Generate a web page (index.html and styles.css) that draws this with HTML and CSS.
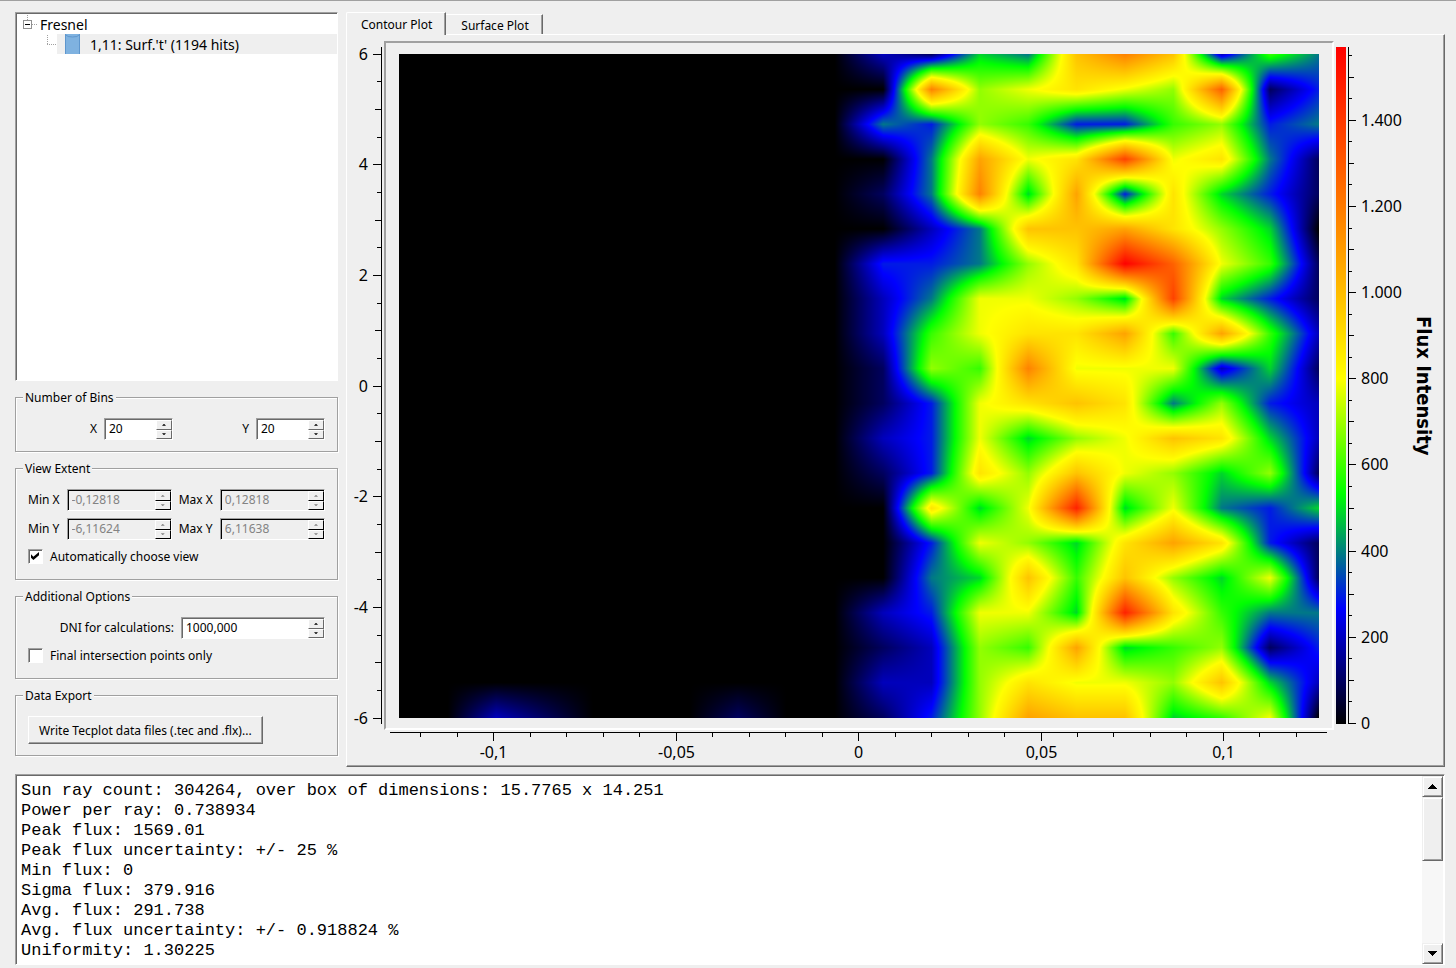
FILE: index.html
```html
<!DOCTYPE html>
<html lang="en">
<head>
<meta charset="utf-8">
<title>Flux Plot</title>
<link rel="stylesheet" href="styles.css">
</head>
<body>
<main class="workspace">
  <aside class="sidebar">
    <ul class="tree" role="tree" aria-label="Surfaces">
      <li class="tree-item" role="treeitem" aria-expanded="true">
        <div class="tree-row">
          <button class="expander" type="button" aria-label="Collapse Fresnel">
            <svg width="20" height="20" viewBox="0 0 20 20" shape-rendering="crispEdges"><path d="M9.500 1v5M14 10.500h5" stroke="#a0a0a0" stroke-dasharray="1 1"/><rect x="5.500" y="6.500" width="8" height="8" fill="#fff" stroke="#919191"/><path d="M7 10.500h5" stroke="#000"/></svg>
          </button>
          <span class="tree-text">Fresnel</span>
        </div>
        <ul class="tree-children" role="group">
          <li class="tree-row" role="treeitem" aria-selected="true">
            <svg class="branch" width="40" height="20" viewBox="0 0 40 20" shape-rendering="crispEdges"><path d="M30.500 1v9M30 10.500h10" fill="none" stroke="#a0a0a0" stroke-dasharray="1 1"/></svg>
            <span class="tree-leaf">
              <svg width="15" height="20" viewBox="0 0 15 20"><path d="M0 0h15v20H0z" fill="#7fb2e0"/><path d="M.5 0v20M14.500 0v20" stroke="#5e96cd"/><path d="M1 1q1 2 6.500 2t6.500-2" fill="none" stroke="#5e96cd"/></svg>
              <span class="tree-text">1,11: Surf.'t' (1194 hits)</span>
            </span>
          </li>
        </ul>
      </li>
    </ul>

    <fieldset class="group bins">
      <legend>Number of Bins</legend>
      <label for="bins-x">X</label>
      <span class="spin"><input id="bins-x" type="text" value="20"><span class="steps"><button type="button" aria-label="More X bins"></button><button type="button" class="down" aria-label="Fewer X bins"></button></span></span>
      <label for="bins-y">Y</label>
      <span class="spin"><input id="bins-y" type="text" value="20"><span class="steps"><button type="button" aria-label="More Y bins"></button><button type="button" class="down" aria-label="Fewer Y bins"></button></span></span>
    </fieldset>

    <fieldset class="group extent">
      <legend>View Extent</legend>
      <label for="min-x">Min X</label>
      <span class="spin off"><input id="min-x" type="text" value="-0,12818" disabled><span class="steps"><button type="button" disabled aria-label="Increase Min X"></button><button type="button" class="down" disabled aria-label="Decrease Min X"></button></span></span>
      <label for="max-x">Max X</label>
      <span class="spin off"><input id="max-x" type="text" value="0,12818" disabled><span class="steps"><button type="button" disabled aria-label="Increase Max X"></button><button type="button" class="down" disabled aria-label="Decrease Max X"></button></span></span>
      <label for="min-y">Min Y</label>
      <span class="spin off"><input id="min-y" type="text" value="-6,11624" disabled><span class="steps"><button type="button" disabled aria-label="Increase Min Y"></button><button type="button" class="down" disabled aria-label="Decrease Min Y"></button></span></span>
      <label for="max-y">Max Y</label>
      <span class="spin off"><input id="max-y" type="text" value="6,11638" disabled><span class="steps"><button type="button" disabled aria-label="Increase Max Y"></button><button type="button" class="down" disabled aria-label="Decrease Max Y"></button></span></span>
      <label class="check"><input type="checkbox" checked>Automatically choose view</label>
    </fieldset>

    <fieldset class="group options">
      <legend>Additional Options</legend>
      <label for="dni">DNI for calculations:</label>
      <span class="spin"><input id="dni" type="text" value="1000,000"><span class="steps"><button type="button" aria-label="Increase DNI"></button><button type="button" class="down" aria-label="Decrease DNI"></button></span></span>
      <label class="check"><input type="checkbox">Final intersection points only</label>
    </fieldset>

    <fieldset class="group export">
      <legend>Data Export</legend>
      <button class="push" type="button">Write Tecplot data files (.tec and .flx)...</button>
    </fieldset>
  </aside>

  <section class="tabs">
    <div class="tab-bar" role="tablist">
      <button class="tab current" type="button" role="tab" aria-selected="true">Contour Plot</button>
      <button class="tab" type="button" role="tab" aria-selected="false">Surface Plot</button>
    </div>
    <div class="pane" role="tabpanel">
      <svg class="axis axis-left" id="axis-left"></svg>
      <div class="frame"><canvas id="contour" width="920" height="664" aria-label="Flux contour plot"></canvas></div>
      <div class="color-bar"></div>
      <svg class="axis axis-scale" id="axis-scale"></svg>
      <div class="scale-title">Flux Intensity</div>
      <svg class="axis axis-bottom" id="axis-bottom"></svg>
    </div>
  </section>
</main>

<section class="log">
  <textarea class="log-text" rows="9" readonly aria-label="Statistics">Sun ray count: 304264, over box of dimensions: 15.7765 x 14.251
Power per ray: 0.738934
Peak flux: 1569.01
Peak flux uncertainty: +/- 25 %
Min flux: 0
Sigma flux: 379.916
Avg. flux: 291.738
Avg. flux uncertainty: +/- 0.918824 %
Uniformity: 1.30225</textarea>
  <div class="scrollbar">
    <button class="scroll-button" type="button" aria-label="Scroll up"><svg width="9" height="5" viewBox="0 0 9 5" shape-rendering="crispEdges"><path d="M4 0h1v1h1v1h1v1h1v1h1v1H0V4h1V3h1V2h1V1h1z"/></svg></button>
    <div class="scroll-track"><div class="scroll-thumb"></div></div>
    <button class="scroll-button" type="button" aria-label="Scroll down"><svg width="9" height="5" viewBox="0 0 9 5" shape-rendering="crispEdges"><path d="M0 0h9v1H8v1H7v1H6v1H5v1H4V4H3V3H2V2H1V1H0z"/></svg></button>
  </div>
</section>
<script src="plot.js"></script>
</body>
</html>
```
FILE: styles.css
```css
* {
  box-sizing: border-box;
}

body {
  margin: 0;
  height: 100vh;
  min-height: 700px;
  border-top: 1px solid #a0a0a0;
  padding: 11px 11px 3px 15px;
  display: flex;
  flex-direction: column;
  gap: 7px;
  background: #efefef;
  color: #000;
  font: 12px/16px "Noto Sans", sans-serif;
}

button,
input {
  font: inherit;
  color: inherit;
}

button {
  padding: 0;
}

label {
  white-space: nowrap;
}

.workspace {
  flex: 1;
  min-height: 0;
  display: grid;
  grid-template-columns: 323px minmax(0, 1fr);
  gap: 8px;
}

/* Sidebar */
.sidebar {
  display: flex;
  flex-direction: column;
  gap: 8px;
  padding-bottom: 11px;
}

.tree {
  flex: 1;
  min-height: 60px;
  margin: 0;
  padding: 1px 0 0;
  list-style: none;
  background: #fff;
  border: 1px solid;
  border-color: #a0a0a0 #fff #fff #a0a0a0;
  box-shadow: inset 1px 1px 0 #696969;
  font: 14px/20px "Noto Sans", sans-serif;
}

.tree-children {
  margin: 0;
  padding: 0;
  list-style: none;
}

.tree-row {
  display: flex;
  height: 20px;
  padding-left: 2px;
}

.tree-text {
  line-height: 22px;
}

.expander {
  display: flex;
  border: 0;
  background: none;
  margin-right: 2px;
}

.branch {
  margin-left: -1px;
}

.tree-leaf {
  flex: 1;
  display: flex;
  gap: 10px;
  padding-left: 8px;
  background: #efefef;
}

.group {
  min-width: 0;
  margin: 0;
  padding: 12px 12px 11px;
  border: 1px solid #a0a0a0;
  box-shadow: 1px 1px 0 #fff, inset 1px 1px 0 #fff;
  display: grid;
  align-items: center;
  gap: 7px;
}

.group legend {
  height: 17px;
  line-height: 17px;
  margin-left: -5px;
  padding: 0 2px;
  background: #efefef;
}

.bins {
  grid-template-columns: 1fr 69px 1fr 69px;
  justify-items: end;
}

.extent {
  grid-template-columns: auto minmax(0, 1fr) auto minmax(0, 1fr);
  padding-bottom: 12px;
}

.options {
  grid-template-columns: 1fr 144px;
  padding-bottom: 12px;
}

.options > label:first-of-type {
  text-align: right;
}

.export {
  justify-items: start;
}

.spin {
  display: flex;
  width: 100%;
  height: 22px;
  background: #fff;
  border: 1px solid;
  border-color: #a0a0a0 #fff #fff #a0a0a0;
  box-shadow: inset 1px 1px 0 #696969;
}

.spin input {
  flex: 1;
  min-width: 0;
  border: 0;
  padding: 0 0 0 4px;
  background: none;
  outline: 0;
}

.steps {
  display: flex;
  flex-direction: column;
  width: 16px;
  padding-top: 1px;
}

.steps button {
  flex: 1;
  display: flex;
  align-items: center;
  justify-content: center;
  background: #efefef;
  border: 1px solid;
  border-color: #fff #696969 #696969 #fff;
}

.steps button::before {
  content: "";
  width: 4px;
  height: 2px;
  background: #000;
  clip-path: polygon(50% 0, 100% 100%, 0 100%);
}

.steps .down::before {
  clip-path: polygon(0 0, 100% 0, 50% 100%);
}

.spin.off {
  background: #efefef;
  color: #838383;
  box-shadow: inset 1px 1px 0 #000;
}

.off .steps button {
  border-color: #fff #000 #000 #fff;
}

.off .steps button::before {
  background: #838383;
}

.check {
  grid-column: 1 / -1;
  display: flex;
  align-items: center;
  gap: 7px;
  height: 20px;
}

.check input {
  appearance: none;
  width: 15px;
  height: 15px;
  margin: 0 0 1px;
  background: #fff;
  border: 1px solid;
  border-color: #a0a0a0 #fff #fff #a0a0a0;
  box-shadow: inset 1px 1px 0 #696969;
}

.check input:checked::before {
  content: "";
  display: block;
  width: 8px;
  height: 8px;
  margin: 2px 0 0 2px;
  background: #000;
  clip-path: polygon(0 28%, 30% 58%, 100% 0, 100% 42%, 30% 100%, 0 72%);
}

.push {
  height: 28px;
  padding: 1px 10px 0;
  background: #efefef;
  border: 1px solid;
  border-color: #fff #696969 #696969 #fff;
  box-shadow: inset -1px -1px 0 #a0a0a0;
}

/* Plot tabs */
.tabs {
  display: flex;
  flex-direction: column;
  min-width: 0;
}

.tab-bar {
  display: flex;
  align-items: flex-end;
  height: 22px;
}

.tab {
  height: 20px;
  padding: 2px 13px 0 15px;
  background: #efefef;
  border: 0 solid #696969;
  border-top: 1px solid #fff;
  border-right-width: 1px;
  box-shadow: inset -1px 0 0 #a0a0a0;
}

.tab.current {
  z-index: 1;
  height: 23px;
  margin-bottom: -1px;
  padding: 1px 13px 0 14px;
  border-left: 1px solid #fff;
  border-radius: 2px 0 0 0;
}

.pane {
  flex: 1;
  min-height: 0;
  display: grid;
  grid-template-columns: 37px minmax(0, 1fr) 12px 58px 40px;
  grid-template-rows: minmax(0, 1fr) 36px;
  padding-top: 6px;
  border: 1px solid;
  border-color: #fff #696969 #696969 #fff;
  box-shadow: inset -1px -1px 0 #a0a0a0;
}

.frame {
  padding: 11px 13px 10px;
  border: 2px solid;
  border-color: #a0a0a0 #fff #fff #a0a0a0;
  min-height: 0;
}

.frame canvas {
  display: block;
  width: 100%;
  height: 100%;
}

.axis {
  overflow: visible;
  font: 16px "Noto Sans", sans-serif;
}

.axis-left {
  width: 100%;
  height: calc(100% - 25px);
  margin-top: 13px;
}

.axis-bottom {
  grid-area: 2 / 2;
  width: calc(100% - 30px);
  height: 35px;
  margin-left: 15px;
}

.color-bar {
  margin: 6px 0 6px 2px;
  background: linear-gradient(to top, #000, #00f 17%, #0f0 34%, #ff0 51%, #f00);
}

.axis-scale {
  width: 100%;
  height: calc(100% - 12px);
  margin-top: 6px;
}

.scale-title {
  writing-mode: vertical-rl;
  text-align: center;
  font: bold 20px/40px "DejaVu Sans Condensed", "DejaVu Sans", sans-serif;
}

/* Statistics log */
.log {
  display: flex;
  background: #fff;
  border: 1px solid;
  border-color: #a0a0a0 #fff #fff #a0a0a0;
  box-shadow: inset 1px 1px 0 #696969;
  padding: 1px 1px 0 1px;
}

.log-text {
  flex: 1;
  min-width: 0;
  border: 0;
  outline: 0;
  resize: none;
  overflow: hidden;
  padding: 5px 4px 3px;
  background: none;
  color: #000;
  font: 17px/20px "Liberation Mono", monospace;
}

.scrollbar {
  width: 21px;
  display: flex;
  flex-direction: column;
}

.scroll-button {
  height: 21px;
  display: flex;
  align-items: center;
  justify-content: center;
}

.scroll-button,
.scroll-thumb {
  background: #efefef;
  border: 1px solid;
  border-color: #efefef #696969 #696969 #efefef;
  box-shadow: inset 1px 1px 0 #fff, inset -1px -1px 0 #a0a0a0;
}

.scroll-track {
  flex: 1;
  background: #f7f7f7;
}

.scroll-thumb {
  height: 44%;
}
```
FILE: plot.js
```js
// Hits per bin, top row first. Bins left of column 9 are empty unless listed.
const rightHalf = [
  [2, 1, 5, 4, 10, 12, 10, 2, 6, 4],
  [0, 12, 7, 8, 9, 8, 7, 13, 1, 3],
  [4, 3, 7, 6, 3, 3, 6, 7, 3, 4],
  [0, 4, 11, 8, 9, 14, 8, 9, 4, 1],
  [1, 4, 12, 5, 11, 3, 9, 5, 3, 1],
  [0, 2, 4, 10, 10, 11, 9, 7, 5, 0],
  [3, 3, 4, 7, 9, 16, 13, 8, 6, 1],
  [2, 4, 8, 8, 7, 5, 14, 5, 3, 1],
  [2, 6, 8, 9, 9, 11, 6, 11, 6, 2],
  [1, 7, 6, 12, 8, 8, 8, 2, 5, 1],
  [1, 3, 8, 9, 10, 9, 4, 7, 3, 2],
  [2, 3, 8, 5, 7, 8, 10, 9, 5, 2],
  [1, 3, 9, 7, 10, 8, 7, 5, 7, 1],
  [0, 9, 5, 8, 15, 5, 8, 4, 3, 5],
  [0, 3, 8, 7, 5, 9, 11, 9, 3, 1],
  [0, 4, 5, 10, 6, 10, 7, 5, 8, 1],
  [2, 3, 8, 8, 5, 15, 9, 6, 4, 4],
  [1, 2, 7, 6, 11, 5, 6, 7, 1, 3],
  [2, 2, 7, 9, 8, 8, 7, 10, 5, 2],
  [1, 3, 7, 11, 10, 10, 5, 6, 8, 0]
];
const bins = rightHalf.map(r => new Array(10).fill(0).concat(r));
bins[19][2] = 2;
bins[19][3] = 1;
bins[19][7] = 1;

const stops = [
  [0, 0, 0, 0],
  [0.17, 0, 0, 255],
  [0.34, 0, 255, 0],
  [0.51, 255, 255, 0],
  [1, 255, 0, 0]
];

function color(t) {
  let i = 1;
  while (i < stops.length - 1 && t > stops[i][0]) i++;
  const a = stops[i - 1], b = stops[i];
  const f = (t - a[0]) / (b[0] - a[0]);
  return [1, 2, 3].map(k => a[k] + (b[k] - a[k]) * f);
}

function drawContour() {
  const canvas = document.getElementById('contour');
  const ctx = canvas.getContext('2d');
  const w = canvas.width, h = canvas.height;
  const img = ctx.createImageData(w, h);
  for (let y = 0; y < h; y++) {
    const gy = y / (h - 1) * 19, j = Math.min(18, Math.floor(gy)), fy = gy - j;
    for (let x = 0; x < w; x++) {
      const gx = x / (w - 1) * 19, i = Math.min(18, Math.floor(gx)), fx = gx - i;
      const top = bins[j][i] * (1 - fx) + bins[j][i + 1] * fx;
      const low = bins[j + 1][i] * (1 - fx) + bins[j + 1][i + 1] * fx;
      const c = color((top * (1 - fy) + low * fy) / 16);
      const p = (y * w + x) * 4;
      img.data[p] = c[0];
      img.data[p + 1] = c[1];
      img.data[p + 2] = c[2];
      img.data[p + 3] = 255;
    }
  }
  ctx.putImageData(img, 0, 0);
}

function line(x1, y1, x2, y2) {
  return `<line x1="${x1}" y1="${y1}" x2="${x2}" y2="${y2}" stroke="#000" shape-rendering="crispEdges"/>`;
}

function label(x, y, anchor, text) {
  return `<text x="${x}" y="${y}" text-anchor="${anchor}">${text}</text>`;
}

const snap = v => Math.floor(v) + 0.5;

function drawLeft() {
  const svg = document.getElementById('axis-left');
  const h = svg.getBoundingClientRect().height;
  let out = line(34.5, -7, 34.5, h + 6);
  for (let k = -12; k <= 12; k++) {
    const y = snap((12 - k) / 24 * h);
    const size = k % 4 === 0 ? 8 : k % 2 === 0 ? 6 : 4;
    out += line(34 - size, y, 34, y);
    if (k % 4 === 0) out += label(21, y + 5.5, 'end', k / 2);
  }
  svg.innerHTML = out;
}

function drawBottom() {
  const svg = document.getElementById('axis-bottom');
  const w = svg.getBoundingClientRect().width;
  let out = line(-9, 2.5, w + 8, 2.5);
  for (let k = -12; k <= 12; k++) {
    const x = snap((k * 0.01 + 0.126) / 0.2522 * w);
    out += line(x, 3, x, k % 5 === 0 ? 11 : 7);
    if (k % 5 === 0) out += label(x, 28, 'middle', String(k / 100).replace('.', ','));
  }
  svg.innerHTML = out;
}

function drawScale() {
  const svg = document.getElementById('axis-scale');
  const h = svg.getBoundingClientRect().height;
  let out = line(2.5, 0, 2.5, h);
  for (let v = 0; v < 1569; v += 50) {
    const y = Math.round(h - 1 - v / 1569.01 * (h - 1)) + 0.5;
    const size = v % 200 === 0 ? 8 : v % 100 === 0 ? 6 : 4;
    out += line(2, y, 2 + size, y);
    if (v % 200 === 0) {
      const text = v < 1000 ? String(v) : `1.${String(v - 1000).padStart(3, '0')}`;
      out += label(15, y + 5.5, 'start', text);
    }
  }
  svg.innerHTML = out;
}

function drawAxes() {
  drawLeft();
  drawBottom();
  drawScale();
}

drawContour();
drawAxes();
window.addEventListener('resize', drawAxes);
```
